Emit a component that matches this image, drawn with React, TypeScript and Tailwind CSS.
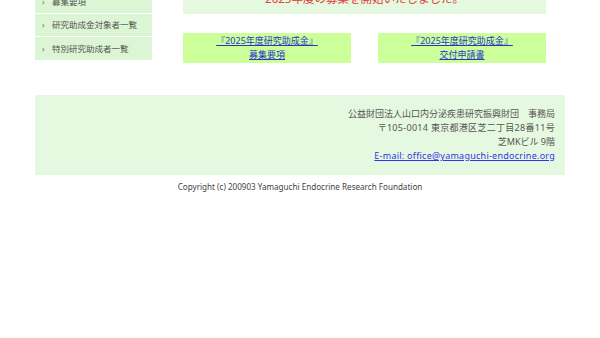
export default function App() {
  const jp = { fontFamily: '"Noto Sans", "Noto Sans CJK JP", sans-serif' };
  return (
    <div className="w-[600px] h-[338px] bg-white overflow-hidden" style={jp}>
      <div className="ml-[35px] w-[530px] -mt-[9px]">
        <div className="flex items-start">
          <ul className="w-[117px] text-[8.5px] leading-[22px] text-[#555]">
            {["募集要項", "研究助成金対象者一覧", "特別研究助成者一覧"].map((t, i) => (
              <li
                key={t}
                className={`h-[23px] bg-[#dcf5d4] flex items-center pl-[7px] ${i < 2 ? "border-b border-white" : ""}`}
              >
                <span className="w-[10px] text-[8px] text-[#666]">›</span>
                <span>{t}</span>
              </li>
            ))}
          </ul>
          <div className="ml-[31px] w-[363px]">
            <div className="h-[23px] bg-[#e5f8e0] pt-[1px] text-center text-[11.5px] leading-[14px] text-[#e03c3c]">
              2025年度の募集を開始いたしました。
            </div>
            <div className="mt-[19px] flex gap-[27px]">
              <a href="#" className="w-[168px] h-[30px] bg-[#ccff99] flex flex-col items-center justify-center text-[9px] leading-[14px] text-[#2a35c8] underline">
                <span>『2025年度研究助成金』</span>
                <span>募集要項</span>
              </a>
              <a href="#" className="w-[168px] h-[30px] bg-[#ccff99] flex flex-col items-center justify-center text-[9px] leading-[14px] text-[#2a35c8] underline">
                <span>『2025年度研究助成金』</span>
                <span>交付申請書</span>
              </a>
            </div>
          </div>
        </div>
        <div className="mt-[32px] h-[80px] bg-[#e5f8e0] pt-[12px] pr-[10px] text-right text-[9px] leading-[14px] text-[#555]">
          <p>公益財団法人山口内分泌疾患研究振興財団　事務局</p>
          <p className="tracking-[0.3px]">〒105-0014 東京都港区芝二丁目28番11号</p>
          <p>芝MKビル 9階</p>
          <p>
            <a href="#" className="text-[#3333ee] underline tracking-[0.25px]">E-mail: office@yamaguchi-endocrine.org</a>
          </p>
        </div>
      </div>
      <p className="mt-[5px] text-center text-[8.1px] leading-[14px] text-[#444]">
        Copyright (c) 200903 Yamaguchi Endocrine Research Foundation
      </p>
    </div>
  );
}
